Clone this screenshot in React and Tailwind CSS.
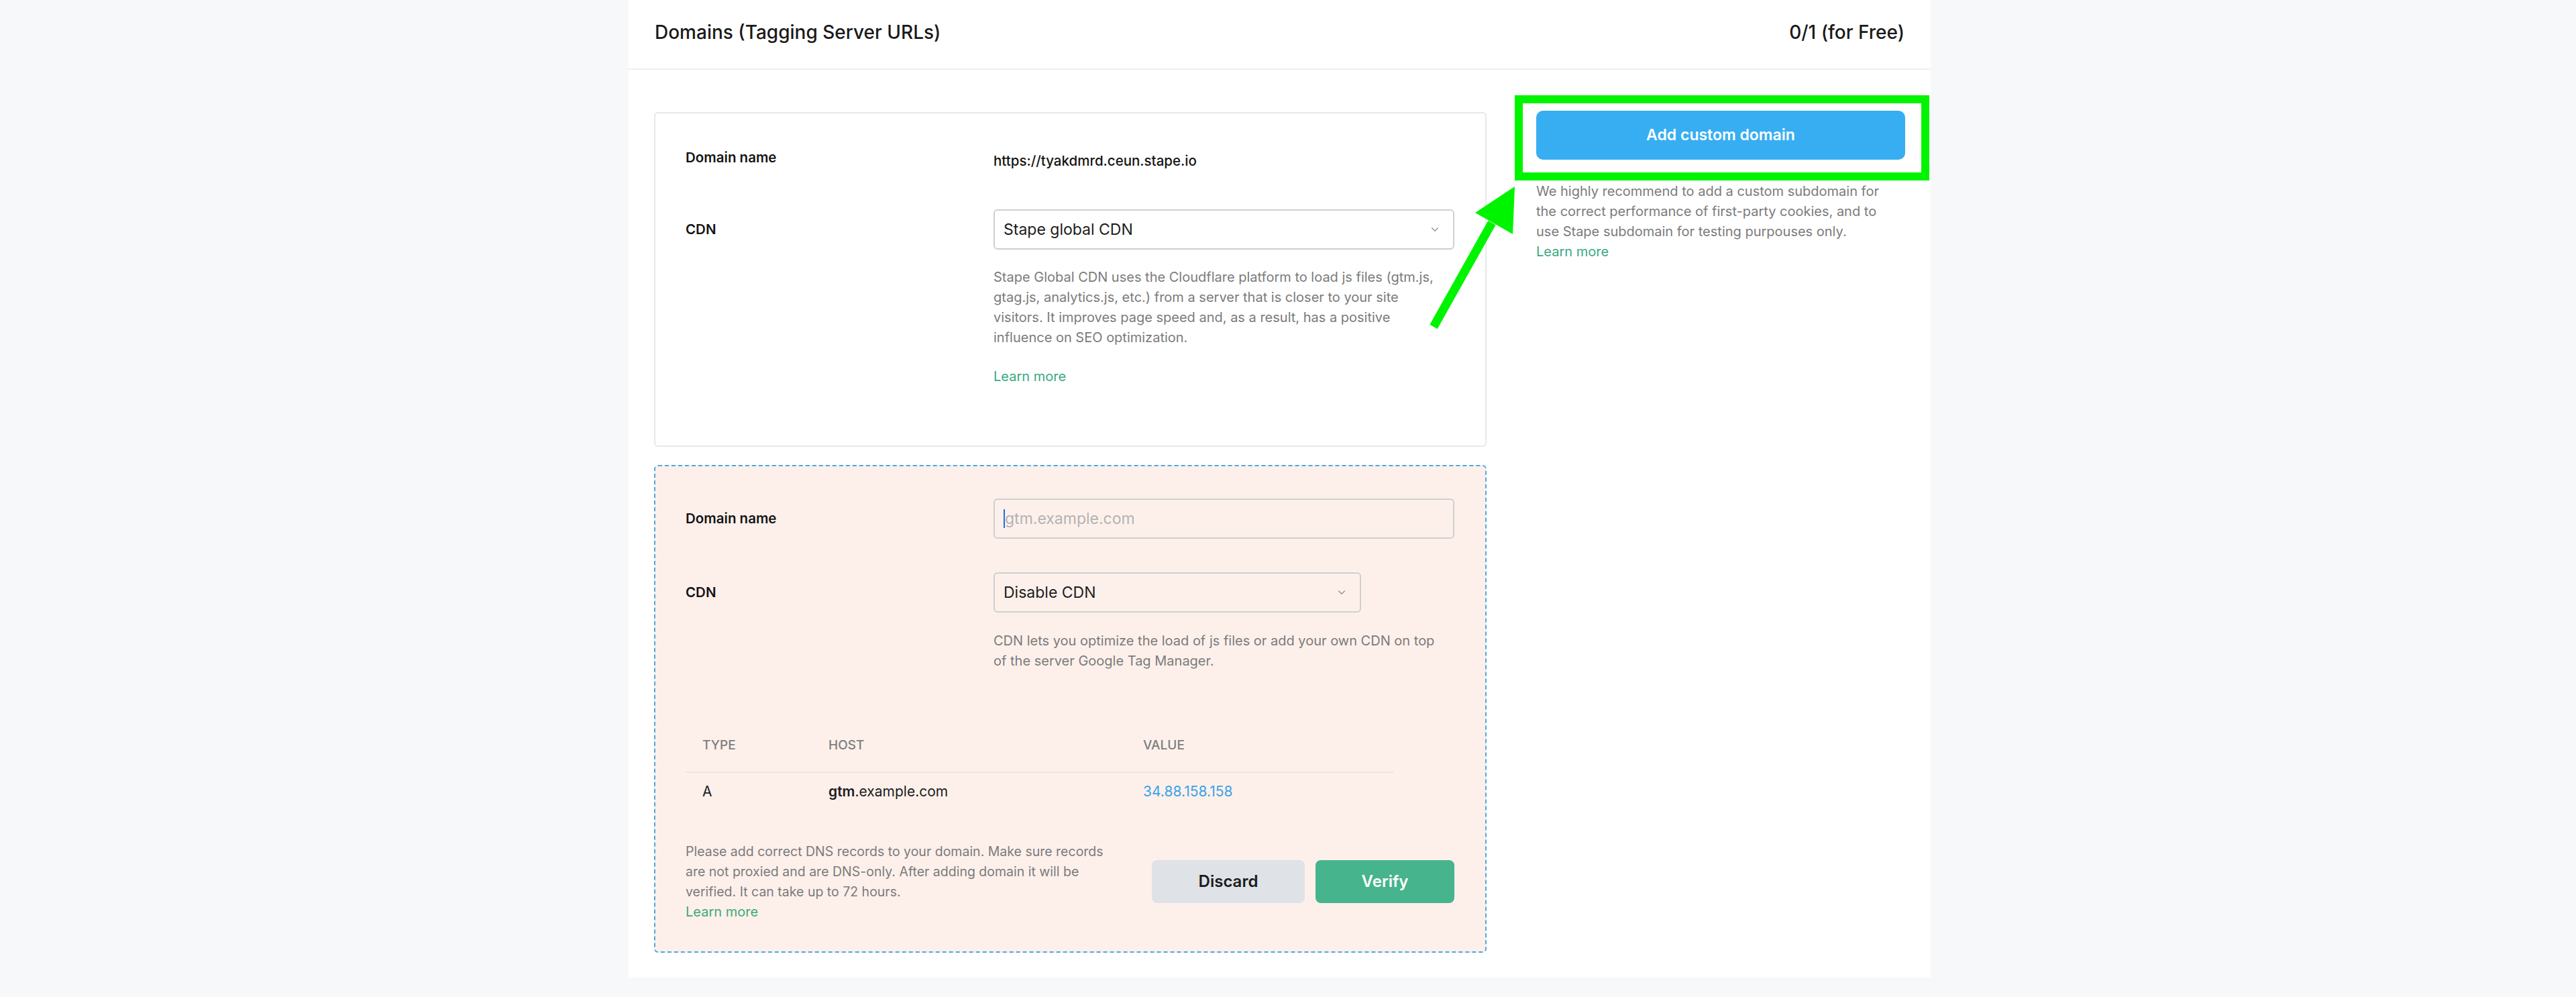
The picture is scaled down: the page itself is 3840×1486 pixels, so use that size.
import { ChevronDown } from "lucide-react";

function Select({ value, className }) {
  return (
    <div
      className={`h-[60px] flex items-center justify-between pl-[13px] pr-[18px] border-2 border-[#cfcfcf] rounded-[6px] ${className}`}
    >
      <span className="text-[23px] text-[#1c1c1c]">{value}</span>
      <ChevronDown size={18} strokeWidth={1.5} className="text-[#8a8a8a]" />
    </div>
  );
}

function LearnMore({ className = "" }) {
  return (
    <a className={`block text-[20px] leading-[30px] text-[#3aa97f] ${className}`}>
      Learn more
    </a>
  );
}

export default function App() {
  return (
    <div className="min-h-[1486px] bg-[#f7f8fa] font-['Inter','Noto_Sans',sans-serif]">
      <div className="ml-[937px] w-[1941px] bg-white pb-[37px]">
        {/* Header */}
        <div className="h-[104px] pb-[6px] px-[39px] flex items-center justify-between border-b-2 border-[#eeeeee]">
          <h1 className="text-[28px] font-medium text-[#1a1a1a]">
            Domains (Tagging Server URLs)
          </h1>
          <span className="text-[28px] font-medium text-[#1a1a1a]">
            0/1 (for Free)
          </span>
        </div>

        <div className="flex gap-[74px] pl-[38px] pt-[63px]">
          {/* Left column */}
          <div className="w-[1241px] flex flex-col gap-[27px]">
            {/* Existing domain card */}
            <div className="border-2 border-[#e8e8e8] rounded-[6px] pl-[45px] pr-[46px] pt-[51px] pb-[88px]">
              <div className="grid grid-cols-[459px_1fr]">
                <div className="text-[20.5px] font-semibold leading-[30px] text-[#141414]">
                  Domain name
                </div>
                <div className="mt-[5px] text-[20.5px] font-medium leading-[30px] text-[#141414]">
                  https://tyakdmrd.ceun.stape.io
                </div>
              </div>
              <div className="grid grid-cols-[459px_1fr] mt-[57px]">
                <div className="h-[60px] flex items-center text-[20.5px] font-semibold text-[#141414]">
                  CDN
                </div>
                <div>
                  <Select value="Stape global CDN" />
                  <p className="mt-[26px] text-[20px] leading-[30px] text-[#7b7b7b] whitespace-nowrap">
                    Stape Global CDN uses the Cloudflare platform to load js files (gtm.js,
                    <br />
                    gtag.js, analytics.js, etc.) from a server that is closer to your site
                    <br />
                    visitors. It improves page speed and, as a result, has a positive
                    <br />
                    influence on SEO optimization.
                  </p>
                  <LearnMore className="mt-[28px]" />
                </div>
              </div>
            </div>

            {/* New domain card */}
            <div className="bg-[#fdf0eb] border-2 border-dashed border-[#4aa9e2] rounded-[6px] pl-[45px] pr-[46px] pt-[48px] pb-[44px]">
              <div className="grid grid-cols-[459px_1fr] items-center">
                <div className="text-[20.5px] font-semibold text-[#141414]">
                  Domain name
                </div>
                <div className="h-[60px] flex items-center pl-[13px] border-2 border-[#cfcfcf] rounded-[6px]">
                  <span className="w-[2px] h-[28px] bg-[#1f6fe5]" />
                  <span className="text-[23px] text-[#b3b3b3]">gtm.example.com</span>
                </div>
              </div>
              <div className="grid grid-cols-[459px_1fr] mt-[50px]">
                <div className="h-[60px] flex items-center text-[20.5px] font-semibold text-[#141414]">
                  CDN
                </div>
                <div>
                  <Select value="Disable CDN" className="w-[548px]" />
                  <p className="mt-[27px] text-[20px] leading-[30px] text-[#7b7b7b] whitespace-nowrap">
                    CDN lets you optimize the load of js files or add your own CDN on top
                    <br />
                    of the server Google Tag Manager.
                  </p>
                </div>
              </div>

              {/* DNS records */}
              <div className="mt-[72px] w-[1056px]">
                <div className="h-[80px] grid grid-cols-[213px_469px_1fr] items-center border-b-2 border-[#f3e4df] text-[19px] font-medium text-[#7d7d7d]">
                  <span className="pl-[25px]">TYPE</span>
                  <span>HOST</span>
                  <span>VALUE</span>
                </div>
                <div className="h-[56px] grid grid-cols-[213px_469px_1fr] items-center text-[21px] text-[#1c1c1c]">
                  <span className="pl-[25px]">A</span>
                  <span>
                    <b className="font-semibold">gtm</b>.example.com
                  </span>
                  <span className="text-[#3ba3e6]">34.88.158.158</span>
                </div>
              </div>

              <div className="mt-[46px] flex items-center justify-between">
                <div>
                  <p className="text-[19.5px] leading-[30px] text-[#7b7b7b] whitespace-nowrap">
                    Please add correct DNS records to your domain. Make sure records
                    <br />
                    are not proxied and are DNS-only. After adding domain it will be
                    <br />
                    verified. It can take up to 72 hours.
                  </p>
                  <LearnMore />
                </div>
                <div className="flex gap-[16px]">
                  <button className="w-[228px] h-[64px] rounded-[8px] bg-[#dfe2e6] text-[24px] font-semibold text-[#1c1c1c]">
                    Discard
                  </button>
                  <button className="w-[207px] h-[64px] rounded-[8px] bg-[#46b48c] text-[24px] font-semibold text-white">
                    Verify
                  </button>
                </div>
              </div>
            </div>
          </div>

          {/* Right column */}
          <div className="relative w-[550px]">
            <button className="w-full h-[73px] -mt-[2px] rounded-[10px] bg-[#37aef2] text-[23px] font-semibold text-white">
              Add custom domain
            </button>
            <p className="mt-[32px] text-[20px] leading-[30px] text-[#7b7b7b] whitespace-nowrap">
              We highly recommend to add a custom subdomain for
              <br />
              the correct performance of first-party cookies, and to
              <br />
              use Stape subdomain for testing purpouses only.
            </p>
            <LearnMore />

            {/* highlight annotation */}
            <div className="absolute left-[-32px] top-[-25px] w-[618px] h-[127px] border-[12px] border-[#00f400] pointer-events-none" />
            <svg
              className="absolute left-[-170px] top-[103px] pointer-events-none"
              width="145"
              height="225"
              viewBox="0 0 145 225"
            >
              <line x1="17" y1="217" x2="104" y2="62" stroke="#00f400" strokeWidth="13" />
              <polygon points="138,8 79,47 135,79" fill="#00f400" />
            </svg>
          </div>
        </div>
      </div>
    </div>
  );
}
